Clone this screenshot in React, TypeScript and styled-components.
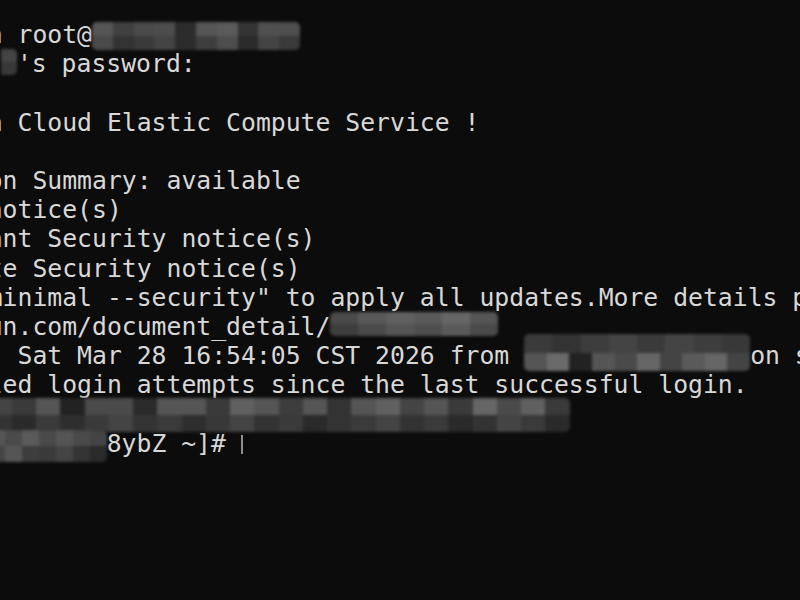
import React from "react";
import styled, { createGlobalStyle } from "styled-components";

const Global = createGlobalStyle`
  html, body { margin: 0; padding: 0; background: #0c0c0c; }
  #root { width: 800px; height: 600px; }
`;

const Screen = styled.div`
  width: 800px;
  height: 600px;
  overflow: hidden;
  background: #0c0c0c;
  padding-top: 20px;
  box-sizing: border-box;
`;

const Buffer = styled.div`
  font-family: "DejaVu Sans Mono", "Liberation Mono", monospace;
  font-size: 24.75px;
  line-height: 29.2px;
  color: #d8d8d8;
  white-space: pre;
  /* terminal view is scrolled horizontally: column 19 sits at x=17.5 */
  margin-left: calc(17.5px - 19ch);
`;

const Line = styled.div`
  height: 29.2px;
`;

const Mosaic = styled.span<{ $w: number; $mt: number; $h: number }>`
  display: inline-flex;
  flex-direction: column;
  vertical-align: top;
  width: ${(p) => p.$w}px;
  height: ${(p) => p.$h}px;
  margin-top: ${(p) => p.$mt}px;
  filter: blur(1.8px);
  border-radius: 5px;
  overflow: hidden;
`;

const MosaicRow = styled.span`
  display: flex;
  flex: 1;
`;

const Cell = styled.span<{ $c: string }>`
  flex: 1;
  background: ${(p) => p.$c};
`;

const Cursor = styled.span`
  display: inline-block;
  width: 2px;
  height: 19px;
  background: #8e8e8e;
  vertical-align: -2px;
`;

type RedactProps = { w: number; mt: number; h: number; top: string[]; bottom: string[] };

const Redact = ({ w, mt, h, top, bottom }: RedactProps) => (
  <Mosaic $w={w} $mt={mt} $h={h}>
    <MosaicRow>
      {top.map((c, i) => (
        <Cell key={i} $c={c} />
      ))}
    </MosaicRow>
    <MosaicRow>
      {bottom.map((c, i) => (
        <Cell key={i} $c={c} />
      ))}
    </MosaicRow>
  </Mosaic>
);

const pad = (n: number) => " ".repeat(n);
const dark = (n: number) => Array.from({ length: n }, () => "#0c0c0c");

export default function App() {
  return (
    <>
      <Global />
      <Screen>
        <Buffer>
          <Line>
            {"PS C:\\Users\\x> ssh root@"}
            <Redact
              w={208}
              mt={2}
              h={28}
              top={["#555", "#404040", "#4a4a4a", "#4c4c4c", "#2c2c2c", "#555", "#5a5a5a", "#333", "#505050", "#4e4e4e"]}
              bottom={["#4a4a4a", "#333", "#3a3a3a", "#444", "#2c2c2c", "#3e3e3e", "#4d4d4d", "#2a2a2a", "#444", "#3a3a3a"]}
            />
          </Line>
          <Line>
            {"root@"}
            <Redact
              w={208}
              mt={0}
              h={26}
              top={[...dark(12), "#444"]}
              bottom={[...dark(12), "#383838"]}
            />
            {"'s password:"}
          </Line>
          <Line>{""}</Line>
          <Line>{"Welcome to Alibaba Cloud Elastic Compute Service !"}</Line>
          <Line>{""}</Line>
          <Line>{"Updates Information Summary: available"}</Line>
          <Line>{"      2 Security notice(s)"}</Line>
          <Line>{"         1 Important Security notice(s)"}</Line>
          <Line>{"         1 Moderate Security notice(s)"}</Line>
          <Line>{'Run "dnf upgrade-minimal --security" to apply all updates.More details please refer to:'}</Line>
          <Line>
            {"https://help.aliyun.com/document_detail/"}
            <Redact
              w={168}
              mt={0}
              h={24}
              top={["#4a4a4a", "#585858", "#606060", "#5a5a5a", "#666", "#555"]}
              bottom={["#3e3e3e", "#4a4a4a", "#555", "#4e4e4e", "#5a5a5a", "#4a4a4a"]}
            />
          </Line>
          <Line>
            {"Last failed login: Sat Mar 28 16:54:05 CST 2026 from "}
            <Redact
              w={226}
              mt={-7}
              h={37}
              top={["#3a3a3a", "#333", "#3d3d3d", "#444", "#3a3a3a", "#444", "#3d3d3d", "#383838"]}
              bottom={["#555", "#6a6a6a", "#222", "#555", "#4a4a4a", "#666", "#444", "#5a5a5a", "#666", "#444"]}
            />
            {"on ssh:notty"}
          </Line>
          <Line>{"There were 12 failed login attempts since the last successful login."}</Line>
          <Line>
            {pad(17)}
            <Redact
              w={582}
              mt={-1}
              h={34}
              top={["#444", "#3a3a3a", "#555", "#222", "#4a4a4a", "#4a4a4a", "#2a2a2a", "#555", "#555", "#3a3a3a", "#606060", "#555", "#3d3d3d", "#555", "#333", "#555", "#606060", "#444", "#555", "#3a3a3a", "#666", "#4a4a4a", "#606060", "#3a3a3a"]}
              bottom={["#333", "#2a2a2a", "#3a3a3a", "#2e2e2e", "#3a3a3a", "#444", "#333", "#3a3a3a", "#2e2e2e", "#383838", "#444", "#333", "#3a3a3a", "#2a2a2a", "#333", "#3a3a3a", "#444", "#333", "#3a3a3a", "#2a2a2a", "#333", "#444", "#3a3a3a", "#2a2a2a"]}
            />
          </Line>
          <Line>
            {pad(17)}
            <Redact
              w={119}
              mt={1}
              h={32}
              top={["#555", "#4a4a4a", "#5a5a5a", "#4a4a4a", "#555", "#4a4a4a", "#444"]}
              bottom={["#444", "#555", "#3d3d3d", "#3a3a3a", "#444", "#333", "#2a2a2a"]}
            />
            {"8ybZ ~]# "}
            <Cursor />
          </Line>
        </Buffer>
      </Screen>
    </>
  );
}
